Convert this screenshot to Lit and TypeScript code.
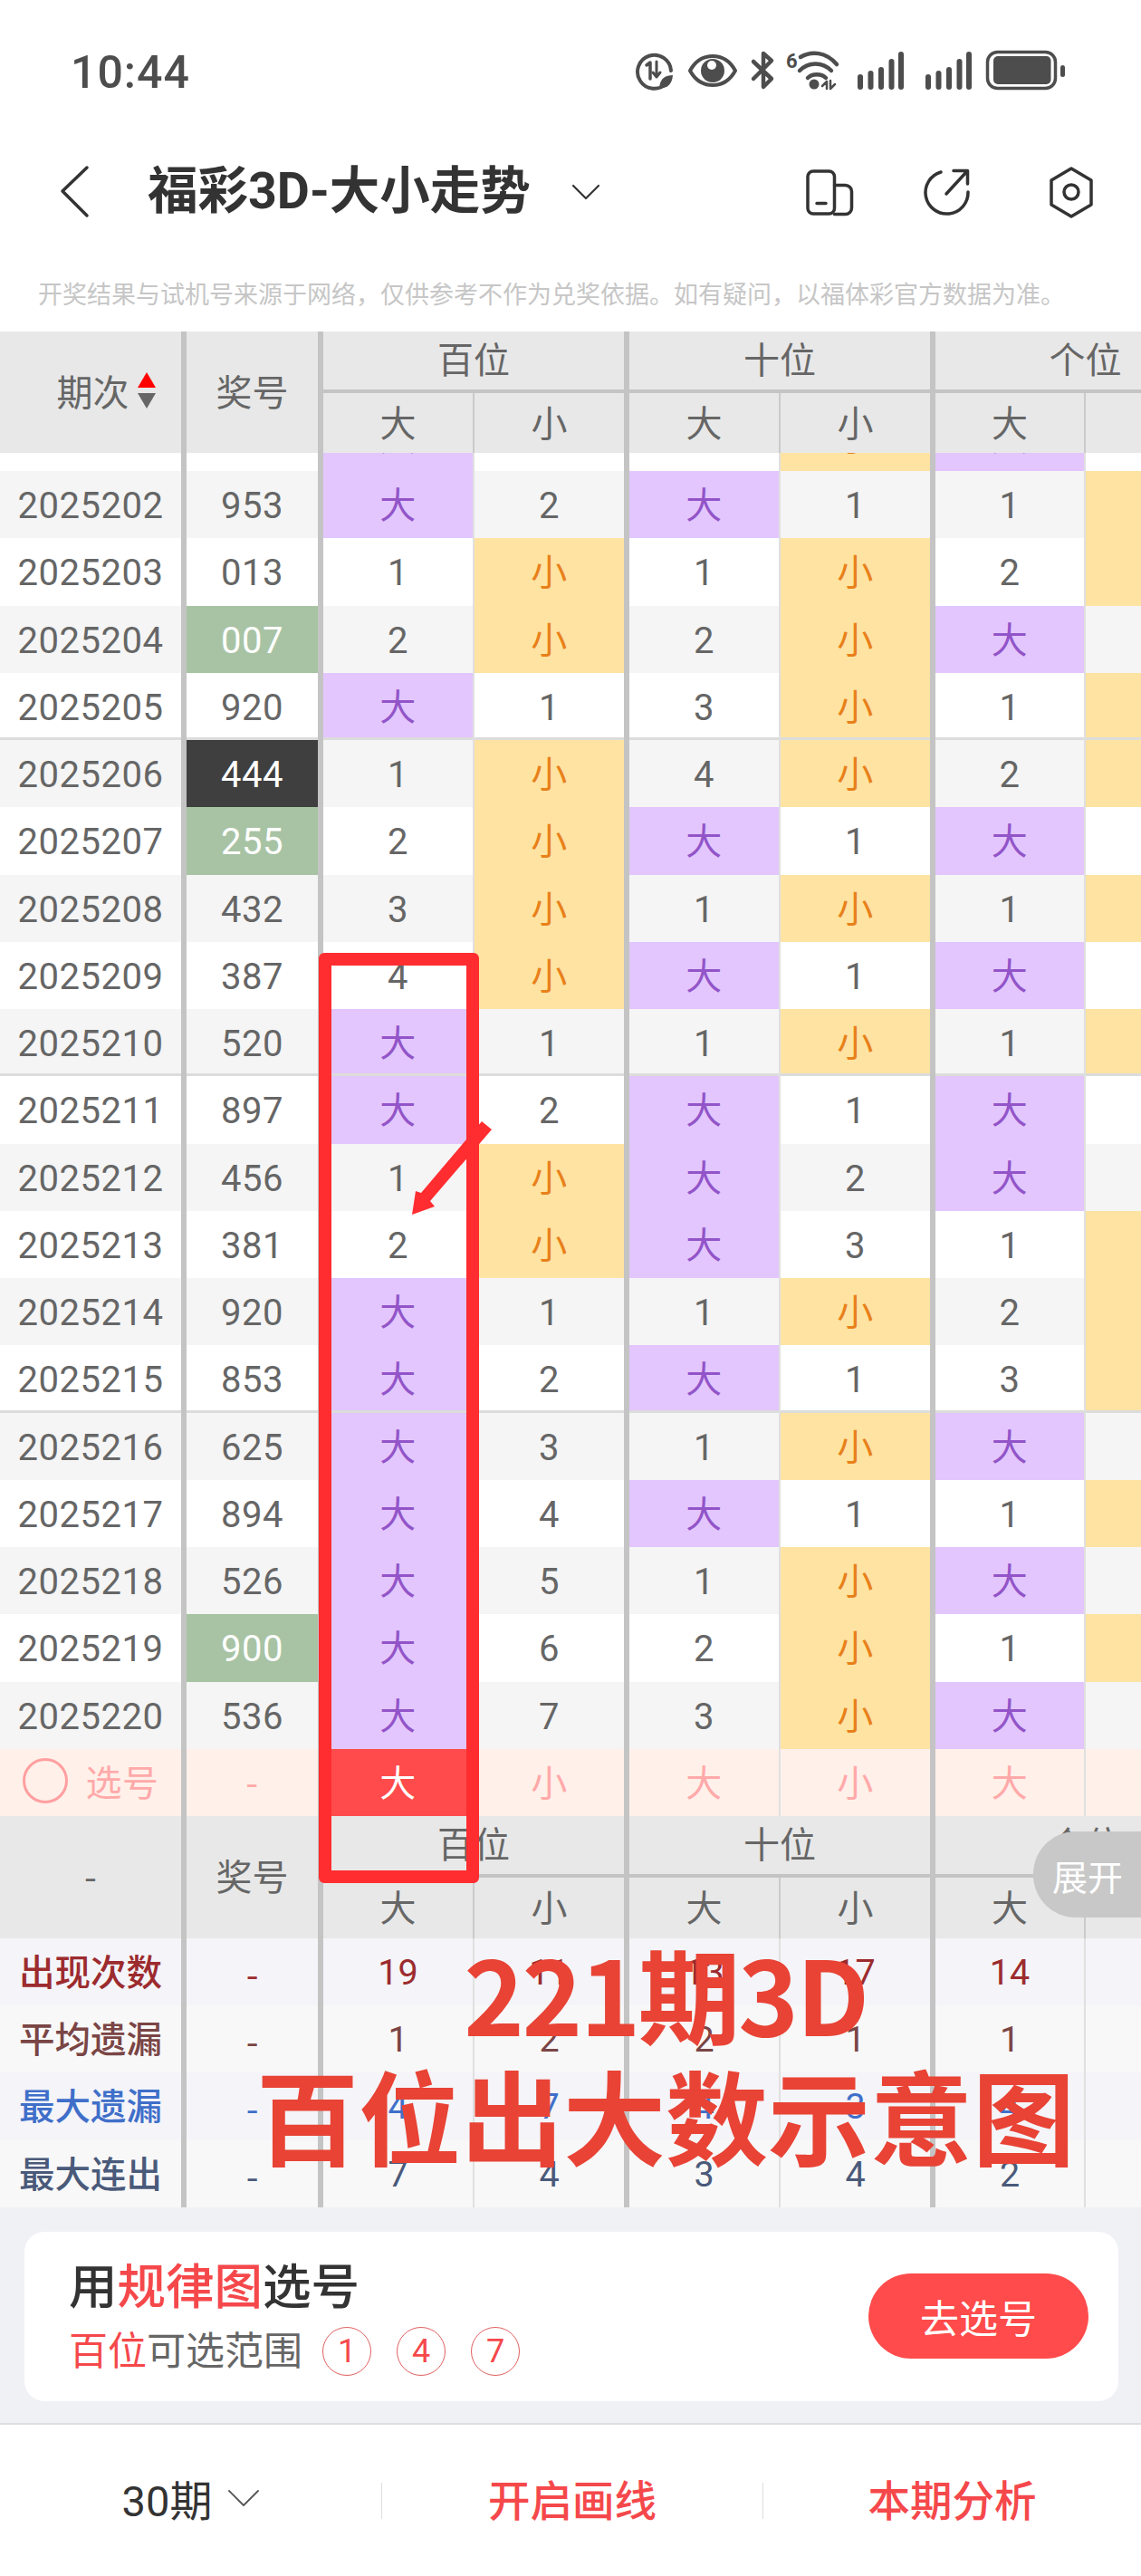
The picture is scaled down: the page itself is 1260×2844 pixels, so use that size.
import {html, css, LitElement} from 'lit';
import {customElement} from 'lit/decorators.js';
import {classMap} from 'lit/directives/class-map.js';

type Row = [string, string, string[], string?];

// issue, number, six cells, number highlight
const ROWS: Row[] = [
  ['2025202', '953', ['大', '2', '大', '1', '1', '小']],
  ['2025203', '013', ['1', '小', '1', '小', '2', '小']],
  ['2025204', '007', ['2', '小', '2', '小', '大', '1'], 'green'],
  ['2025205', '920', ['大', '1', '3', '小', '1', '小']],
  ['2025206', '444', ['1', '小', '4', '小', '2', '小'], 'dark'],
  ['2025207', '255', ['2', '小', '大', '1', '大', '1'], 'green'],
  ['2025208', '432', ['3', '小', '1', '小', '1', '小']],
  ['2025209', '387', ['4', '小', '大', '1', '大', '1']],
  ['2025210', '520', ['大', '1', '1', '小', '1', '小']],
  ['2025211', '897', ['大', '2', '大', '1', '大', '1']],
  ['2025212', '456', ['1', '小', '大', '2', '大', '2']],
  ['2025213', '381', ['2', '小', '大', '3', '1', '小']],
  ['2025214', '920', ['大', '1', '1', '小', '2', '小']],
  ['2025215', '853', ['大', '2', '大', '1', '3', '小']],
  ['2025216', '625', ['大', '3', '1', '小', '大', '1']],
  ['2025217', '894', ['大', '4', '大', '1', '1', '小']],
  ['2025218', '526', ['大', '5', '1', '小', '大', '1']],
  ['2025219', '900', ['大', '6', '2', '小', '1', '小'], 'green'],
  ['2025220', '536', ['大', '7', '3', '小', '大', '1']],
];

const STATS = [
  {label: '出现次数', tone: 'count', cells: ['19', '11', '13', '17', '14', '16']},
  {label: '平均遗漏', tone: 'avg', cells: ['1', '2', '2', '1', '1', '1']},
  {label: '最大遗漏', tone: 'miss', cells: ['4', '7', '4', '3', '4', '3']},
  {label: '最大连出', tone: 'run', cells: ['7', '4', '3', '4', '2', '3']},
];

@customElement('app-root')
export class AppRoot extends LitElement {
  static styles = css`
    :host {
      display: block;
      position: relative;
      width: 1260px;
      height: 2844px;
      overflow: hidden;
      background: #fff;
      font-family: Roboto, "Noto Sans CJK SC", sans-serif;
      color: #666;
    }

    svg {
      display: block;
      flex: none;
    }

    .status {
      height: 160px;
      display: flex;
      align-items: center;
      justify-content: space-between;
      padding: 0 80px 0 78px;
    }

    .time {
      font-size: 50px;
      font-weight: 500;
      color: #4d4d4d;
      letter-spacing: 1px;
    }

    .nav {
      height: 104px;
      display: flex;
      align-items: center;
      padding: 0 47px 0 64px;
    }

    .title {
      margin-left: 63px;
      font-size: 55.500px;
      line-height: 60px;
      font-weight: 700;
      color: #333;
      white-space: nowrap;
    }

    .title-chevron {
      margin-left: 45px;
    }

    .nav-icons {
      margin-left: auto;
      display: flex;
    }

    .nav-icons svg + svg {
      margin-left: 69px;
    }

    .nav-icons svg:last-child {
      margin-left: 78px;
    }

    .notice {
      height: 78px;
      padding: 20px 0 0 42px;
      margin-bottom: 4px;
      display: flex;
      align-items: center;
      font-size: 27px;
      color: #c6c6c6;
      white-space: nowrap;
    }

    .table {
      width: 1260px;
      overflow: hidden;
    }

    .grid {
      display: grid;
      width: 1364px;
      grid-template-columns: 206px 151px 167px 171px 167px 171px 166px 165px;
    }

    .head {
      background: #e8e8e8;
      grid-template-rows: 68px 66px;
      font-size: 40px;
    }

    .head.lower {
      grid-template-rows: 68px 67px;
    }

    .head > div {
      display: flex;
      align-items: center;
      justify-content: center;
      box-sizing: border-box;
      padding-bottom: 4px;
    }

    .span-rows {
      grid-row: span 2;
    }

    .head > .group {
      grid-column: span 2;
      border-bottom: 4px solid #c4c4c4;
      padding-bottom: 6px;
    }

    .head .period {
      gap: 9px;
      padding-left: 34px;
      padding-bottom: 4px;
    }

    .sort {
      display: flex;
      flex-direction: column;
      gap: 6px;
    }

    .main {
      border-right: 6px solid #c4c4c4;
    }

    .sub {
      border-right: 2px solid #e0e0e0;
    }

    .head .sub {
      border-right-color: #cacaca;
    }

    .clip {
      height: 20px;
      overflow: hidden;
    }

    .clip .row {
      margin-top: -54.26px;
    }

    .clip .row > div {
      padding: 0 0 6px;
    }

    .row {
      grid-auto-rows: 74.26px;
      font-size: 40px;
      letter-spacing: 0.5px;
    }

    .row > div {
      display: flex;
      align-items: center;
      justify-content: center;
      box-sizing: border-box;
      padding-top: 3px;
    }

    .row.grey {
      background: #f5f5f5;
    }

    .row.sep > div {
      box-shadow: inset 0 -3px 0 #dcdcdc;
    }

    .row > .big {
      background: #e2c6fd;
      color: #9254c8;
      padding: 0 0 4px;
    }

    .row > .small {
      background: #fee3a2;
      color: #e8801a;
      padding: 0 0 4px;
    }

    .green {
      background: #a8c3a4;
      color: #fff;
    }

    .dark {
      background: #3f3f3f;
      color: #fff;
    }

    .dash {
      font-family: "Noto Sans CJK SC", sans-serif;
    }

    .row.pick {
      background: #fff0ea;
      color: #ffa9a9;
      grid-auto-rows: 74px;
    }

    .row.pick > div {
      padding: 0 0 3px;
    }

    .row.pick > .picked {
      background: #ff4b4b;
      color: #fff;
    }

    .row > .pick-label {
      gap: 20px;
    }

    .ring {
      width: 50px;
      height: 50px;
      box-sizing: border-box;
      border: 3px solid #ff9fa0;
      border-radius: 50%;
    }

    .stat {
      grid-auto-rows: 74.25px;
      font-size: 39.500px;
      letter-spacing: 0;
      background: #f8f8f8;
    }

    .stat.tint {
      background: #f4f4f9;
    }

    .stat > div {
      padding-top: 1px;
    }

    .row > .label {
      padding: 0 0 5px;
      font-weight: 500;
    }

    .count {
      color: #9c2b2e;
    }

    .avg {
      color: #7a4545;
    }

    .miss {
      color: #3f6fc9;
    }

    .run {
      color: #4a5a7a;
    }

    .promo {
      height: 240px;
      box-sizing: border-box;
      padding: 27px 25px 0 27px;
      background: #f0f1f5;
      border-bottom: 2px solid #dedede;
      margin-bottom: 1px;
    }

    .card {
      height: 187px;
      box-sizing: border-box;
      padding: 0 33px 0 49px;
      background: #fff;
      border-radius: 22px;
      display: flex;
      align-items: center;
      justify-content: space-between;
    }

    .card-title {
      font-size: 53.500px;
      line-height: 62px;
      font-weight: 500;
      color: #333;
    }

    .red {
      color: #f5484b;
    }

    .range {
      display: flex;
      align-items: center;
      margin-top: 11px;
      margin-bottom: -5px;
      font-size: 43px;
      line-height: 56px;
    }

    .ball {
      width: 54px;
      height: 54px;
      margin-left: 28px;
      box-sizing: border-box;
      border: 1.500px solid #e0605f;
      border-radius: 50%;
      display: flex;
      align-items: center;
      justify-content: center;
      font-size: 36px;
      color: #f5484b;
    }

    .ball.first {
      margin-left: 22px;
    }

    .go {
      width: 243px;
      height: 94px;
      border-radius: 47px;
      background: #ff4b4b;
      color: #fff;
      font-size: 43px;
      display: flex;
      align-items: center;
      justify-content: center;
    }

    .footer {
      height: 166px;
      display: grid;
      grid-template-columns: 421px 421px 418px;
      align-items: center;
    }

    .tab {
      height: 40px;
      box-sizing: border-box;
      padding-bottom: 6px;
      display: flex;
      align-items: center;
      justify-content: center;
      gap: 18px;
      font-size: 46.500px;
      font-weight: 500;
      color: #f5484b;
    }

    .tab + .tab {
      border-left: 1px solid #dedede;
    }

    .tab.plain {
      font-size: 47px;
      font-weight: 400;
      color: #333;
    }

    .mark {
      position: absolute;
      left: 352px;
      top: 1052px;
      width: 177px;
      height: 1027px;
      box-sizing: border-box;
      border: 14px solid #ff2d30;
      border-radius: 6px;
    }

    .arrow {
      position: absolute;
      left: 450px;
      top: 1230px;
    }

    .caption {
      position: absolute;
      left: 235px;
      top: 2132px;
      width: 1000px;
      text-align: center;
      font-family: "Noto Sans CJK SC", sans-serif;
      font-size: 113px;
      line-height: 134px;
      font-weight: 700;
      color: #e84335;
    }

    .caption span {
      letter-spacing: -2.500px;
    }

    .expand {
      position: absolute;
      right: 0;
      top: 2022px;
      width: 119px;
      height: 95px;
      box-sizing: border-box;
      padding-left: 21px;
      border-radius: 47px 0 0 47px;
      background: #c8c8c8;
      color: #fff;
      font-size: 39px;
      display: flex;
      align-items: center;
    }
  `;

  private statusIcons() {
    return html`
      <svg width="480" height="60" viewBox="700 50 480 60" fill="none" stroke="#4d4d4d" stroke-linecap="round" stroke-linejoin="round">
        <path d="M736 92A18.500 18.500 0 1 1 741 78" stroke-width="4" />
        <path d="M714 72l4-3v18" stroke-width="3.500" />
        <path d="M725 68v17m-4-5l4 5 4-5" stroke-width="3" />
        <path d="M743 83c-8 0-14 3-15 14 8 1 14-3 15-14z" fill="#4d4d4d" stroke="none" />

        <path d="M762 78c6-11 15-16 25-16s19 5 25 16c-6 11-15 16-25 16s-19-5-25-16z" stroke-width="4" />
        <circle cx="787" cy="78" r="13" fill="#4d4d4d" stroke="none" />
        <circle cx="786" cy="72" r="5" fill="#fff" stroke="none" />

        <path d="M832 68l20 19-9 9V80M843 74V59l9 8-20 20" stroke-width="4.500" />

        <text x="868" y="75" fill="#4d4d4d" stroke="none" font-family="Roboto" font-size="22" font-weight="700">6</text>
        <path d="M884 63c12-7 28-6 40 8" stroke-width="4.500" />
        <path d="M883 78c10-10 25-10 35 0" stroke-width="4.500" />
        <path d="M892 86c5-5 15-5 20 0" stroke-width="4.500" />
        <circle cx="899" cy="93" r="5.500" fill="#4d4d4d" stroke="none" />
        <path d="M908 95l5-5v8M917 89v9l5-5" stroke-width="2.500" />

        <path d="M950 85v11M961.500 81v15M973 77v19M984.500 68v28M995 60v36" stroke-width="6" />
        <path d="M1025 85v11M1036.500 81v15M1048 77v19M1059.500 68v28M1070 60v36" stroke-width="6" />

        <rect x="1090.500" y="57.500" width="75" height="40" rx="11" stroke-width="3.500" />
        <rect x="1097" y="62" width="63.500" height="31" rx="5" fill="#4d4d4d" stroke="none" />
        <rect x="1171" y="72" width="5" height="13" rx="2.500" fill="#4d4d4d" stroke="none" />
      </svg>
    `;
  }

  private navIcons() {
    return html`
      <div class="nav-icons">
        <svg width="60" height="60" viewBox="886 182 60 60" fill="none" stroke="#333" stroke-width="3.500" stroke-linecap="round" stroke-linejoin="round">
          <rect x="892" y="189" width="29.500" height="47" rx="6" />
          <path d="M921.500 204.500h12a7 7 0 0 1 7 7v18a7 7 0 0 1-7 7h-12M902 224.500h10" />
        </svg>
        <svg width="60" height="60" viewBox="1015 182 60 60" fill="none" stroke="#333" stroke-width="3.500" stroke-linecap="round" stroke-linejoin="round">
          <path d="M1039 190A23.500 23.500 0 1 0 1069 212M1045 214l23-25M1053 188.500h15.500V203" />
        </svg>
        <svg width="60" height="60" viewBox="1153 182 60 60" fill="none" stroke="#333" stroke-width="3.500" stroke-linecap="round" stroke-linejoin="round">
          <path d="M1183 186l22 13v27l-22 13-22-13v-27z" />
          <circle cx="1183" cy="212" r="8" />
        </svg>
      </div>
    `;
  }

  private header(lower: boolean) {
    return html`
      <div class="grid head ${lower ? 'lower' : ''}">
        ${lower
          ? html`<div class="span-rows main dash">-</div>`
          : html`
              <div class="span-rows main period">
                期次
                <span class="sort">
                  <svg width="20" height="17" viewBox="0 0 20 17"><path d="M10 0l10 17H0z" fill="#f00" /></svg>
                  <svg width="20" height="17" viewBox="0 0 20 17"><path d="M0 0h20L10 17z" fill="#666" /></svg>
                </span>
              </div>
            `}
        <div class="span-rows main">奖号</div>
        <div class="group main">百位</div>
        <div class="group main">十位</div>
        <div class="group">个位</div>
        ${['大', '小', '大', '小', '大', '小'].map((t, i) => html`<div class=${i % 2 ? (i < 5 ? 'main' : '') : 'sub'}>${t}</div>`)}
      </div>
    `;
  }

  private cells(values: string[]) {
    return values.map(
      (v, i) => html`
        <div
          class=${classMap({
            sub: i % 2 === 0,
            main: i % 2 === 1 && i < 5,
            big: v === '大',
            small: v === '小',
          })}
        >
          ${v}
        </div>
      `
    );
  }

  private dataRow(row: Row, i: number) {
    const [issue, num, values, hl] = row;
    return html`
      <div class=${classMap({grid: true, row: true, grey: i % 2 === 0, sep: i === 3 || i === 8 || i === 13})}>
        <div class="main">${issue}</div>
        <div class="main ${hl || ''}">${num}</div>
        ${this.cells(values)}
      </div>
    `;
  }

  render() {
    return html`
      <div class="status">
        <div class="time">10:44</div>
        ${this.statusIcons()}
      </div>
      <div class="nav">
        <svg width="36" height="60" viewBox="64 182 36 60" fill="none" stroke="#333" stroke-width="3.500" stroke-linecap="round" stroke-linejoin="round">
          <path d="M96 185L69 211l27 27" />
        </svg>
        <div class="title">福彩3D-大小走势</div>
        <svg class="title-chevron" width="32" height="18" viewBox="0 0 32 18" fill="none" stroke="#333" stroke-width="2.200" stroke-linecap="round" stroke-linejoin="round">
          <path d="M2 2l14 14L30 2" />
        </svg>
        ${this.navIcons()}
      </div>
      <div class="notice">开奖结果与试机号来源于网络，仅供参考不作为兑奖依据。如有疑问，以福体彩官方数据为准。</div>

      <div class="table">
        ${this.header(false)}
        <div class="clip">
          <div class="grid row">
            <div class="main"></div>
            <div class="main"></div>
            ${this.cells(['大', '1', '', '小', '大', '1'])}
          </div>
        </div>
        ${ROWS.map((r, i) => this.dataRow(r, i))}
        <div class="grid row pick">
          <div class="main pick-label"><span class="ring"></span>选号</div>
          <div class="main dash">-</div>
          <div class="sub picked">大</div>
          <div class="main">小</div>
          <div class="sub">大</div>
          <div class="main">小</div>
          <div class="sub">大</div>
          <div>小</div>
        </div>
        ${this.header(true)}
        ${STATS.map(
          (s, i) => html`
            <div class="grid row stat ${s.tone} ${i % 2 ? '' : 'tint'}">
              <div class="main label">${s.label}</div>
              <div class="main dash">-</div>
              ${s.cells.map((v, j) => html`<div class=${j % 2 ? (j < 5 ? 'main' : '') : 'sub'}>${v}</div>`)}
            </div>
          `
        )}
      </div>

      <div class="promo">
        <div class="card">
          <div>
            <div class="card-title">用<span class="red">规律图</span>选号</div>
            <div class="range">
              <span><span class="red">百位</span>可选范围</span>
              <span class="ball first">1</span>
              <span class="ball">4</span>
              <span class="ball">7</span>
            </div>
          </div>
          <div class="go">去选号</div>
        </div>
      </div>

      <div class="footer">
        <div class="tab plain">
          30期
          <svg width="34" height="18" viewBox="0 0 34 18" fill="none" stroke="#555" stroke-width="1.800" stroke-linecap="round" stroke-linejoin="round">
            <path d="M1 1l16 16L33 1" />
          </svg>
        </div>
        <div class="tab">开启画线</div>
        <div class="tab">本期分析</div>
      </div>

      <div class="mark"></div>
      <svg class="arrow" width="100" height="120" viewBox="450 1230 100 120">
        <path d="M532 1238l11 9-68 79 5 6-25 9 4-26 6 2z" fill="#ff2d30" />
      </svg>
      <div class="caption"><span>221期3D</span><br />百位出大数示意图</div>
      <div class="expand">展开</div>
    `;
  }
}

declare global {
  interface HTMLElementTagNameMap {
    'app-root': AppRoot;
  }
}
